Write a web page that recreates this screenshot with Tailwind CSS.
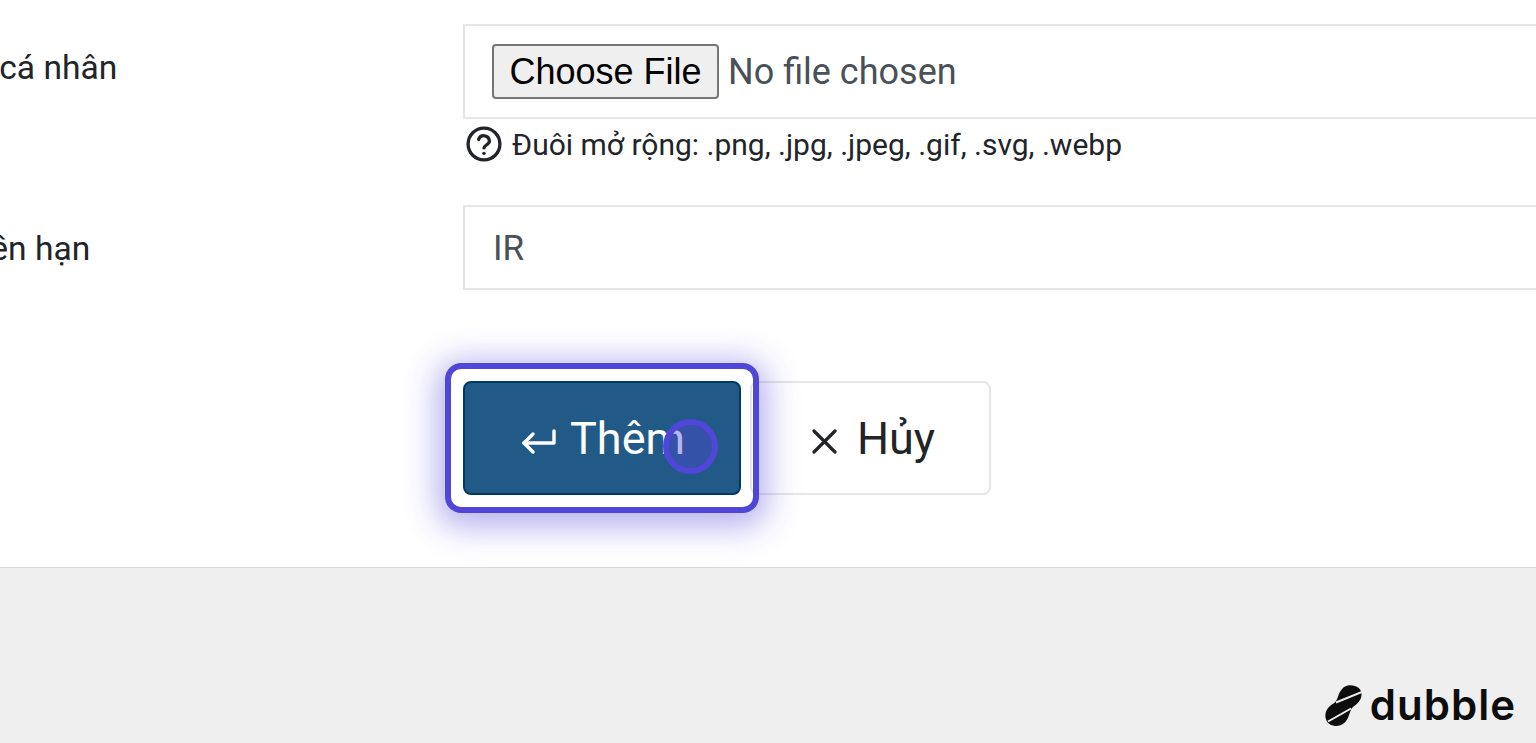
<!doctype html>
<html lang="en">
  <head>
    <meta charset="UTF-8" />
    <title>Thêm thành viên</title>
    <script src="https://cdn.jsdelivr.net/npm/@tailwindcss/browser@4"></script>
  </head>
  <body class="h-[743px] overflow-hidden bg-white font-['Roboto',sans-serif] text-[#212529]">
    <main class="h-[568px] border-b border-[#d8d8d8] bg-white pt-6">
      <!-- avatar row -->
      <div class="flex">
        <label class="w-[463px] shrink-0 overflow-hidden pt-[23px] text-[33.6px] leading-[42px]">
          <span class="-ml-[68px] block whitespace-nowrap">Ảnh cá nhân</span>
        </label>
        <div class="w-[1200px] shrink-0">
          <div class="flex h-[95px] items-center border-2 border-[#e6e6e6] pl-[27px]">
            <input
              type="file"
              class="w-[700px] text-[36px] leading-[42px] text-[#495057] file:mr-[9px] file:h-[55px] file:w-[227px] file:rounded-[4px] file:border-2 file:border-[#767676] file:bg-[#efefef] file:font-['Liberation_Sans',sans-serif] file:text-[36px] file:text-black"
            />
          </div>
          <div class="mt-[7px] flex h-[36px] items-center gap-[10px] pl-[3px] text-[30px]">
            <svg class="size-[36px]" viewBox="0 0 24 24" fill="none" stroke="#212529" stroke-width="2.2" stroke-linecap="round" stroke-linejoin="round">
              <circle cx="12" cy="12" r="10.6" />
              <path d="M8.4 9a3.7 3.7 0 0 1 7.2 1c0 2.4-3.6 2.8-3.6 4.6" />
              <path d="M11.9 18.2h.1" />
            </svg>
            <span>Đuôi mở rộng: .png, .jpg, .jpeg, .gif, .svg, .webp</span>
          </div>
        </div>
      </div>

      <!-- role row -->
      <div class="mt-[43px] flex">
        <label class="w-[463px] shrink-0 overflow-hidden pt-[23px] text-[33.6px] leading-[42px]">
          <span class="-ml-[67px] block whitespace-nowrap">Quyền hạn</span>
        </label>
        <div class="flex h-[85px] w-[1200px] shrink-0 items-center border-2 border-[#e6e6e6] pl-[28px] pt-[3px] text-[35px] text-[#495057]">IR</div>
      </div>

      <!-- actions -->
      <div class="mt-[91px] flex gap-[9px] pl-[463px]">
        <button class="relative flex h-[114px] w-[278px] items-center justify-center gap-[14px] rounded-[8px] border-2 border-[#003a63] bg-[#225a87] pl-[3px] pt-[1px] text-[45px] text-white">
          <svg class="mt-[6px] h-[26px] w-[34px]" viewBox="0 0 34 26" fill="none" stroke="currentColor" stroke-width="3.4" stroke-linecap="round" stroke-linejoin="round">
            <path d="M32 2v12H2" />
            <path d="M11 5 2 14l9 9" />
          </svg>
          <span>Thêm</span>
          <!-- highlight from the recording -->
          <span class="absolute -inset-[20px] z-10 rounded-[16px] border-[6px] border-[#5046d8] shadow-[0_6px_32px_8px_rgba(80,70,216,0.42)]"></span>
          <span class="absolute left-[198px] top-[36px] z-10 size-[55px] rounded-full border-[6px] border-[#5046d8] bg-[#5046d8]/40"></span>
        </button>
        <button class="flex h-[114px] w-[241px] items-center justify-center gap-[20px] rounded-[8px] border-2 border-[#e6e6e6] bg-white pl-[6px] pt-[2px] text-[45px]">
          <svg class="mt-[5px] size-[25px]" viewBox="0 0 25 25" fill="none" stroke="currentColor" stroke-width="3.2" stroke-linecap="round">
            <path d="M2 2l21 21M23 2 2 23" />
          </svg>
          <span>Hủy</span>
        </button>
      </div>
    </main>

    <footer class="flex h-[175px] items-end justify-end bg-[#efefef] pb-[13px] pr-[20px]">
      <div class="flex items-center gap-[8px]">
        <svg class="mt-[2px] h-[42px] w-[37px]" viewBox="0 0 37 42">
          <path fill="#0d0d0d" d="M23 .5C31-.5 37 3.5 36.5 10 36 16 32 19 28.5 21.5 26 23.5 25.5 26 24 30 22 37 17 41.5 10 41 3.5 40.5-.5 35 .5 29 1.5 23.5 5 20.5 8.5 18.5 11 17 12 14.5 13 11.5 15 5.5 18 1.5 23 .5z" />
          <path stroke="#efefef" stroke-width="2" fill="none" d="M11 17.5 37 7M3 36.5l23-13" />
        </svg>
        <span class="font-['Inter',sans-serif] text-[42px] font-semibold leading-[50px] tracking-[1px] text-[#0d0d0d]">dubble</span>
      </div>
    </footer>
  </body>
</html>
